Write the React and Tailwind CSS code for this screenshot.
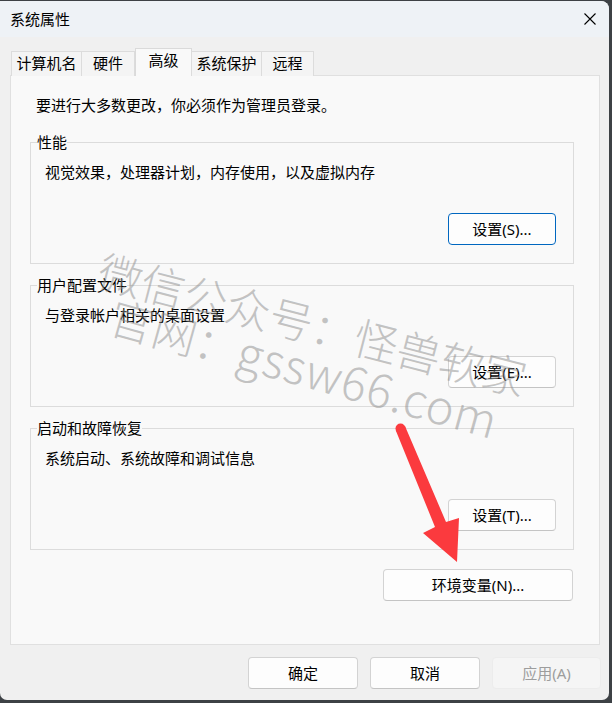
import React from "react";

const font = "font-['Noto_Sans','Noto_Sans_CJK_SC',sans-serif]";

const tabs = [
  { key: "name", label: "计算机名", w: "w-[71px]" },
  { key: "hw", label: "硬件", w: "w-[54px]" },
  { key: "adv", label: "高级", w: "w-[57px]", active: true },
  { key: "prot", label: "系统保护", w: "w-[71px]" },
  { key: "remote", label: "远程", w: "w-[53px]" },
];

const groups = [
  { title: "性能", text: "视觉效果，处理器计划，内存使用，以及虚拟内存", button: "设置(S)...", primary: true },
  { title: "用户配置文件", text: "与登录帐户相关的桌面设置", button: "设置(E)..." },
  { title: "启动和故障恢复", text: "系统启动、系统故障和调试信息", button: "设置(T)..." },
];

function Button({ children, primary, disabled, className = "" }) {
  let look = "bg-[#fdfdfd] border-[#d3d3d3] border-b-[#c4c4c4] text-black";
  if (primary) look = "bg-[#fdfdfd] border-[#0067c0] text-black";
  if (disabled) look = "bg-[#f5f5f5] border-[#ececec] text-[#9d9d9d]";
  return (
    <button type="button" className={"h-[32px] rounded-[4px] border text-[15px] leading-[20px] " + look + " " + className}>
      {children}
    </button>
  );
}

function Group({ title, text, button, primary, className = "" }) {
  return (
    <fieldset className={"w-[544px] border border-[#dcdcdc] px-0 pb-[18px] " + className}>
      <legend className="ml-[6px] px-0 text-[15px] leading-[20px] text-black">{title}</legend>
      <p className="mt-[10px] pl-[14px] text-[15px] leading-[20px] text-black">{text}</p>
      <div className="mt-[31px] flex justify-end pr-[17px]">
        <Button primary={primary} className="w-[108px]">{button}</Button>
      </div>
    </fieldset>
  );
}

export default function App() {
  return (
    <div className={"relative h-[703px] w-[612px] overflow-hidden bg-[#3d4145] pt-px pr-[3px] pb-[3px] " + font}>
      <div className="flex h-full flex-col overflow-hidden rounded-tr-[8px] rounded-b-[7px] bg-[#f0f0f0]">
        {/* title bar */}
        <div className="flex h-[36px] items-center justify-between bg-[#eef2f6] pl-[10px] pr-[13px]">
          <span className="text-[15px] leading-[20px] text-black">系统属性</span>
          <svg width="12" height="12" viewBox="0 0 12 12" className="text-black">
            <path d="M0.5 0.5 L11.5 11.5 M11.5 0.5 L0.5 11.5" stroke="currentColor" strokeWidth="1.1" />
          </svg>
        </div>

        <div className="flex flex-col pl-[10px] pr-[9px] pt-[11px]">
          {/* tabs */}
          <div className="relative z-10 -mb-px flex h-[28px] items-end pl-px">
            {tabs.map((t) =>
              t.active ? (
                <div
                  key={t.key}
                  className={t.w + " flex h-[28px] items-start justify-center border border-b-0 border-[#dadada] bg-[#f9f9f9] pt-[1px] text-[15px] leading-[20px] text-black"}
                >
                  {t.label}
                </div>
              ) : (
                <div
                  key={t.key}
                  className={t.w + " -ml-px flex h-[25px] items-center justify-center border border-b-0 border-[#dcdcdc] bg-[#f4f4f4] pb-[2px] text-[15px] leading-[20px] text-black first:ml-0"}
                >
                  {t.label}
                </div>
              )
            )}
          </div>

          {/* panel */}
          <div className="h-[570px] border border-[#e0e0e0] bg-[#f9f9f9] pl-[19px]">
            <p className="pl-[6px] pt-[19px] text-[15px] leading-[20px] text-black">要进行大多数更改，你必须作为管理员登录。</p>
            <Group {...groups[0]} className="mt-[17px]" />
            <Group {...groups[1]} className="mt-[11px]" />
            <Group {...groups[2]} className="mt-[11px]" />
            <div className="mt-[19px] flex w-[544px] justify-end pr-px">
              <Button className="w-[190px]">环境变量(N)...</Button>
            </div>
          </div>

          {/* footer */}
          <div className="-mr-px mt-[12px] flex justify-end gap-[12px]">
            <Button className="w-[110px]">确定</Button>
            <Button className="w-[110px]">取消</Button>
            <Button disabled className="w-[109px]">应用(A)</Button>
          </div>
        </div>
      </div>

      {/* watermark */}
      <div className="pointer-events-none absolute left-[313px] top-[323px] -translate-x-1/2 -translate-y-1/2 rotate-[14.5deg] whitespace-nowrap font-['Noto_Sans_CJK_SC',sans-serif] text-[44px] font-light leading-none text-[rgba(140,140,140,0.5)]">
        微信公众号：怪兽软家
      </div>
      <div className="pointer-events-none absolute left-[305px] top-[366px] -translate-x-1/2 -translate-y-1/2 rotate-[15.5deg] whitespace-nowrap font-['Noto_Sans_CJK_SC',sans-serif] text-[44px] font-light leading-none text-[rgba(140,140,140,0.5)]">
        官网：<span className="text-[47px] tracking-[1px]">gssw66.com</span>
      </div>

      {/* red arrow */}
      <svg className="pointer-events-none absolute left-0 top-0" width="612" height="703" viewBox="0 0 612 703">
        <circle cx="400.5" cy="428.5" r="5" fill="#fb3a3e" />
        <path d="M395.8 430.5 L435 527 L423 533 L457 562 L459 518 L446 522 L405.2 426.5 Z" fill="#fb3a3e" />
      </svg>
    </div>
  );
}
